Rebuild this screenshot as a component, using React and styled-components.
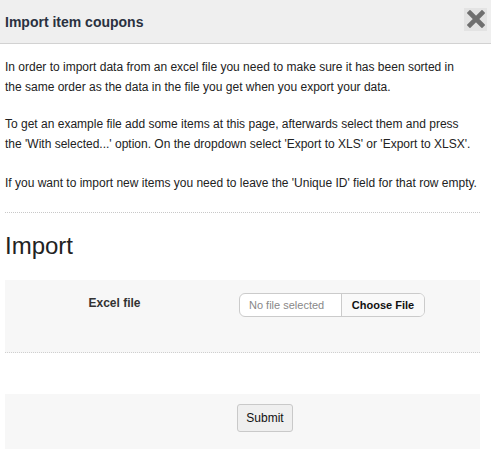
import React from "react";
import styled, { createGlobalStyle } from "styled-components";

const Global = createGlobalStyle`
  html, body { margin: 0; padding: 0; background: #fff; }
  body { font-family: "Liberation Sans", Arial, sans-serif; color: #333; }
`;

const Dialog = styled.div`
  width: 491px;
  height: 449px;
  overflow: hidden;
  background: #fff;
`;

const Header = styled.div`
  height: 43px;
  background: #efefef;
  border-bottom: 1px solid #d2d2d2;
  display: flex;
  align-items: center;
  justify-content: space-between;
  padding: 0 4px 0 5px;
  box-sizing: content-box;
`;

const Title = styled.h3`
  margin: 0;
  font-size: 14px;
  font-weight: bold;
  color: #2a3140;
  padding-top: 1px;
`;

const Close = styled.button`
  width: 23px;
  height: 23px;
  padding: 0;
  border: none;
  background: #e3e3e3;
  display: flex;
  align-items: center;
  justify-content: center;
  margin-top: -5px;
  cursor: pointer;
`;

const Content = styled.div`
  padding: 13px 11px 0 5px;
`;

const Para = styled.p`
  margin: 0 0 ${(p) => p.$mb || "19px"};
  font-size: 12px;
  line-height: 20px;
  color: #222;
  white-space: nowrap;
`;

const Divider = styled.hr`
  border: none;
  border-top: 1px dotted #c8c8c8;
  margin: 19px 0 0;
`;

const Heading = styled.h2`
  margin: 20px 0 21px;
  font-size: 24px;
  line-height: 26px;
  font-weight: normal;
  color: #222;
`;

const Panel = styled.div`
  background: #f7f7f7;
  padding: ${(p) => p.$pad};
  border-bottom: ${(p) => (p.$dotted ? "1px dotted #cfcfcf" : "none")};
  margin-bottom: ${(p) => p.$mb || "0"};
`;

const Row = styled.div`
  display: grid;
  grid-template-columns: 219px 1fr;
  column-gap: 13px;
  align-items: start;
`;

const Label = styled.label`
  text-align: center;
  font-size: 12px;
  font-weight: bold;
  color: #333;
  padding-top: 2px;
  line-height: 16px;
`;

const FileBox = styled.label`
  margin-left: 2px;
  width: 186px;
  height: 24px;
  box-sizing: border-box;
  display: flex;
  border: 1px solid #cbcbcb;
  border-radius: 6px;
  overflow: hidden;
  background: #fff;
  font-size: 11px;
  cursor: pointer;
  input { display: none; }
`;

const FileName = styled.span`
  flex: 1;
  display: flex;
  align-items: center;
  padding-left: 9px;
  color: #888;
`;

const FileButton = styled.span`
  width: 82px;
  display: flex;
  align-items: center;
  justify-content: center;
  border-left: 1px solid #cbcbcb;
  background: #f9f9f9;
  font-weight: bold;
  color: #111;
`;

const Submit = styled.button`
  width: 56px;
  height: 28px;
  border: 1px solid #c9c9c9;
  border-radius: 3px;
  background: #efefef;
  font-family: "Liberation Sans", Arial, sans-serif;
  font-size: 12px;
  color: #111;
  padding: 0;
  cursor: pointer;
`;

export default function App() {
  return (
    <>
      <Global />
      <Dialog>
        <Header>
          <Title>Import item coupons</Title>
          <Close aria-label="Close">
            <svg width="18" height="18" viewBox="0 0 18 18">
              <path d="M3 3 L15 15 M15 3 L3 15" stroke="#6f6f6f" strokeWidth="4.6" strokeLinecap="square" />
            </svg>
          </Close>
        </Header>
        <Content>
          <Para $mb="17px">
            In order to import data from an excel file you need to make sure it has been sorted in
            <br />
            the same order as the data in the file you get when you export your data.
          </Para>
          <Para>
            To get an example file add some items at this page, afterwards select them and press
            <br />
            the 'With selected...' option. On the dropdown select 'Export to XLS' or 'Export to XLSX'.
          </Para>
          <Para $mb="0">
            If you want to import new items you need to leave the 'Unique ID' field for that row empty.
          </Para>
          <Divider />
          <Heading>Import</Heading>
          <Panel $pad="13px 0 35px" $dotted $mb="41px">
            <Row>
              <Label>Excel file</Label>
              <FileBox>
                <input type="file" />
                <FileName>No file selected</FileName>
                <FileButton>Choose File</FileButton>
              </FileBox>
            </Row>
          </Panel>
          <Panel $pad="10px 0 20px">
            <Row>
              <span />
              <div>
                <Submit type="submit">Submit</Submit>
              </div>
            </Row>
          </Panel>
        </Content>
      </Dialog>
    </>
  );
}
